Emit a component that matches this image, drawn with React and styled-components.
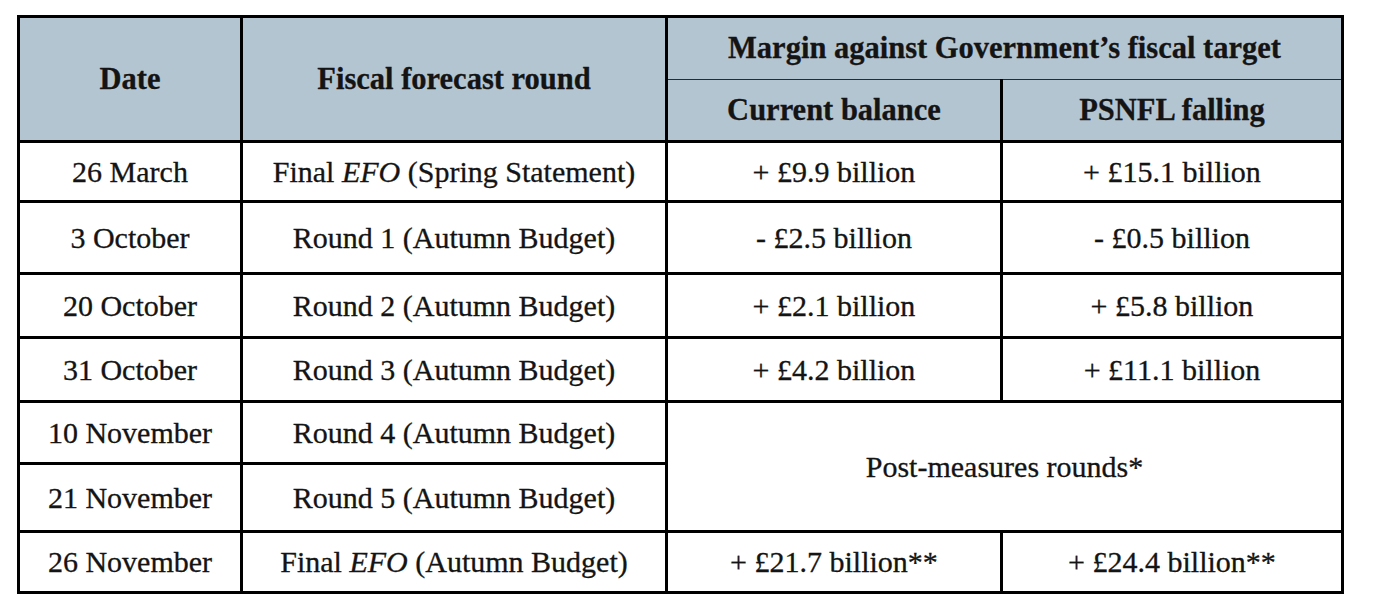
import React from 'react'
import styled, { createGlobalStyle } from 'styled-components'

const GlobalStyle = createGlobalStyle`
    html, body {
        margin: 0;
        padding: 0;
        background: #ffffff;
    }
`

const Page = styled.div`
    padding: 15px 0 0 17px;
    font-family: "Liberation Serif", "DejaVu Serif", serif;
    color: #141414;
`

const Table = styled.table`
    border-collapse: collapse;
    table-layout: fixed;
    width: 1327px;
    border: 3px solid #000;
`

const Row = styled.tr`
    height: ${props => props.h}px;
`

const HeadCell = styled.th`
    background: #b4c5d2;
    font-weight: 700;
    font-size: 30.5px;
    text-align: center;
    vertical-align: middle;
    padding: 0;
    border-left: 3px solid #000;
    border-right: 3px solid #000;
    border-top: ${props => props.thinTop ? '1.5px solid #2b2b2b' : '3px solid #000'};
    border-bottom: ${props => props.thinBottom ? '1.5px solid #2b2b2b' : '3px solid #000'};
    -webkit-text-stroke: 0.3px #141414;

    &.thin-right {
        border-right-width: 2px;
    }
`

const Cell = styled.td`
    font-size: 30px;
    text-align: center;
    vertical-align: middle;
    padding: 0;
    border: 3px solid #000;
    -webkit-text-stroke: 0.3px #141414;

    &.thin-right {
        border-right-width: 2px;
    }

    em {
        font-style: italic;
    }
`

const rows = [
    { date: '26 March', round: <>Final <em>EFO</em> (Spring Statement)</>, current: '+ £9.9 billion', psnfl: '+ £15.1 billion', h: 60 },
    { date: '3 October', round: 'Round 1 (Autumn Budget)', current: '- £2.5 billion', psnfl: '- £0.5 billion', h: 72 },
    { date: '20 October', round: 'Round 2 (Autumn Budget)', current: '+ £2.1 billion', psnfl: '+ £5.8 billion', h: 64 },
    { date: '31 October', round: 'Round 3 (Autumn Budget)', current: '+ £4.2 billion', psnfl: '+ £11.1 billion', h: 64 },
]

export default function App() {
    return (
        <>
            <GlobalStyle />
            <Page>
                <Table>
                    <colgroup>
                        <col style={{ width: 223 }} />
                        <col style={{ width: 425 }} />
                        <col style={{ width: 335 }} />
                        <col style={{ width: 341 }} />
                    </colgroup>
                    <thead>
                        <Row h={63}>
                            <HeadCell rowSpan={2}>Date</HeadCell>
                            <HeadCell rowSpan={2}>Fiscal forecast round</HeadCell>
                            <HeadCell colSpan={2} thinBottom>Margin against Government’s fiscal target</HeadCell>
                        </Row>
                        <Row h={62}>
                            <HeadCell thinTop className="thin-right">Current balance</HeadCell>
                            <HeadCell thinTop>PSNFL falling</HeadCell>
                        </Row>
                    </thead>
                    <tbody>
                        {rows.map((r, i) => (
                            <Row key={i} h={r.h}>
                                <Cell>{r.date}</Cell>
                                <Cell>{r.round}</Cell>
                                <Cell className="thin-right">{r.current}</Cell>
                                <Cell>{r.psnfl}</Cell>
                            </Row>
                        ))}
                        <Row h={62}>
                            <Cell>10 November</Cell>
                            <Cell>Round 4 (Autumn Budget)</Cell>
                            <Cell colSpan={2} rowSpan={2}>Post-measures rounds*</Cell>
                        </Row>
                        <Row h={68}>
                            <Cell>21 November</Cell>
                            <Cell>Round 5 (Autumn Budget)</Cell>
                        </Row>
                        <Row h={61}>
                            <Cell>26 November</Cell>
                            <Cell>Final <em>EFO</em> (Autumn Budget)</Cell>
                            <Cell className="thin-right">+ £21.7 billion**</Cell>
                            <Cell>+ £24.4 billion**</Cell>
                        </Row>
                    </tbody>
                </Table>
            </Page>
        </>
    )
}
